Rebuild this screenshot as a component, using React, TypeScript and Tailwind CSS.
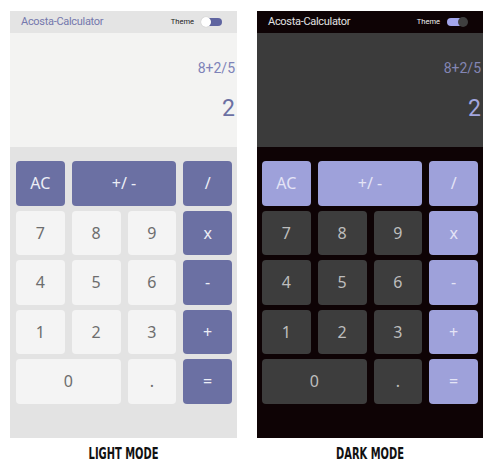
import React from 'react'

type Mode = 'light' | 'dark'

const keys = [
  { label: 'AC', op: true, span: 1 },
  { label: '+/ -', op: true, span: 2 },
  { label: '/', op: true, span: 1 },
  { label: '7' },
  { label: '8' },
  { label: '9' },
  { label: 'x', op: true },
  { label: '4' },
  { label: '5' },
  { label: '6' },
  { label: '-', op: true },
  { label: '1' },
  { label: '2' },
  { label: '3' },
  { label: '+', op: true },
  { label: '0', span: 2 },
  { label: '.' },
  { label: '=', op: true },
]

function Toggle({ mode }: { mode: Mode }) {
  if (mode === 'light') {
    return (
      <div className="relative w-[21px] h-[10px]">
        <div className="absolute right-0 top-[1px] h-[8px] w-[16px] rounded-full bg-[#5f64a0]" />
        <div className="absolute left-0 top-0 h-[10px] w-[10px] rounded-full bg-white shadow-[0_0_1px_rgba(0,0,0,0.25)]" />
      </div>
    )
  }
  return (
    <div className="relative w-[21px] h-[10px]">
      <div className="absolute left-0 top-[1px] h-[8px] w-[16px] rounded-full bg-[#a3a6ec]" />
      <div className="absolute right-0 top-0 h-[10px] w-[10px] rounded-full bg-[#3f3f3f]" />
    </div>
  )
}

function Calculator({ mode }: { mode: Mode }) {
  const dark = mode === 'dark'
  return (
    <div className="flex flex-col items-center">
      <div className={`flex flex-col h-[427px] ${dark ? 'w-[226px]' : 'w-[227px]'}`}>
        {/* Header */}
        <div
          className={`h-[22px] flex items-center justify-between pl-[11px] pr-[15px] ${
            dark ? 'bg-[#0e0305]' : 'bg-[#e4e4e4]'
          }`}
        >
          <span
            className={`text-[11px] font-['Roboto',sans-serif] tracking-[-0.3px] ${
              dark ? 'text-[#e2e2e2]' : 'text-[#7478ad]'
            }`}
          >
            Acosta-Calculator
          </span>
          <div className="flex items-center gap-[7px]">
            <span
              className={`text-[7.5px] font-['Roboto',sans-serif] ${dark ? 'text-[#f0f0f0]' : 'text-[#222]'}`}
            >
              Theme
            </span>
            <Toggle mode={mode} />
          </div>
        </div>

        {/* Display */}
        <div
          className={`h-[114px] flex flex-col items-end pr-[2px] font-['Roboto',sans-serif] ${
            dark ? 'bg-[#3b3b3b]' : 'bg-[#f3f3f2]'
          }`}
        >
          <div className={`mt-[25px] text-[14px] leading-[20px] ${dark ? 'text-[#8486b4]' : 'text-[#7d82b8]'}`}>
            8+2/5
          </div>
          <div className={`mt-[16px] text-[23px] leading-[30px] ${dark ? 'text-[#a3a6de]' : 'text-[#6b70a3]'}`}>
            2
          </div>
        </div>

        {/* Keypad */}
        <div
          className={`flex-1 pt-[14px] ${dark ? 'pl-[5px] pr-[5px] bg-[#0e0305]' : 'pl-[6px] pr-[5px] bg-[#e3e3e3]'}`}
        >
          <div className="grid grid-cols-4 gap-x-[7px] gap-y-[5px] auto-rows-[44.5px] font-['Noto_Sans',sans-serif]">
            {keys.map((k) => (
              <div
                key={k.label}
                className={`flex items-center justify-center rounded-[4px] text-[16px] ${
                  k.span === 2 ? 'col-span-2' : ''
                } ${
                  k.op
                    ? dark
                      ? 'bg-[#9ea1da] text-[#e4e4f6]'
                      : 'bg-[#6b70a3] text-[#eceef6]'
                    : dark
                      ? 'bg-[#3d3d3d] text-[#bdbdbd]'
                      : 'bg-[#f4f4f4] text-[#6d6d6d]'
                }`}
              >
                {k.label}
              </div>
            ))}
          </div>
        </div>
      </div>
      <div className="mt-[9px] text-[11px] leading-[13px] font-semibold text-[#111] font-['Liberation_Sans_Narrow','DejaVu_Sans_Condensed',sans-serif] scale-y-[1.5]">
        {dark ? 'DARK MODE' : 'LIGHT MODE'}
      </div>
    </div>
  )
}

export default function App() {
  return (
    <div className="w-[494px] h-[469px] bg-white pt-[11px] pl-[10px] flex gap-[20px]">
      <Calculator mode="light" />
      <Calculator mode="dark" />
    </div>
  )
}
